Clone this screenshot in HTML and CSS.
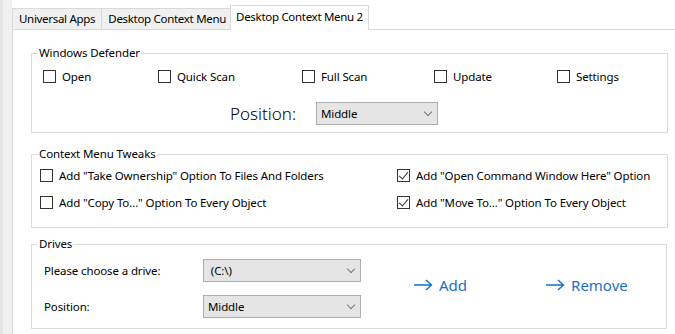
FILE: index.html
```html
<!DOCTYPE html>
<html lang="en">
<head>
    <meta charset="UTF-8">
    <title>Tweaks</title>
    <link rel="stylesheet" href="styles.css">
</head>
<body>
    <div id="lateral"></div>
    <div id="janela">
        <div id="abas">
            <span class="aba">Universal Apps</span>
            <span class="aba">Desktop Context Menu</span>
            <span class="aba ativa">Desktop Context Menu 2</span>
        </div>
        <div id="pagina">
            <fieldset class="grupo" id="defender">
                <legend>Windows Defender</legend>
                <div class="linha-def">
                    <label class="opcao"><span class="caixa"></span>Open</label>
                    <label class="opcao"><span class="caixa"></span>Quick Scan</label>
                    <label class="opcao"><span class="caixa"></span>Full Scan</label>
                    <label class="opcao"><span class="caixa"></span>Update</label>
                    <label class="opcao"><span class="caixa"></span>Settings</label>
                </div>
                <div class="linha-pos">
                    <span class="pos-grande">Position:</span>
                    <div class="combo combo-def">Middle<span class="seta"></span></div>
                </div>
            </fieldset>

            <fieldset class="grupo" id="tweaks">
                <legend>Context Menu Tweaks</legend>
                <div class="grade-tweaks">
                    <label class="opcao"><span class="caixa"></span>Add "Take Ownership" Option To Files And Folders</label>
                    <label class="opcao"><span class="caixa marcada"></span>Add "Open Command Window Here" Option</label>
                    <label class="opcao"><span class="caixa"></span>Add "Copy To..." Option To Every Object</label>
                    <label class="opcao"><span class="caixa marcada"></span>Add "Move To..." Option To Every Object</label>
                </div>
            </fieldset>

            <fieldset class="grupo" id="drives">
                <legend>Drives</legend>
                <div class="drives-corpo">
                    <div class="drives-campos">
                        <div class="campo">
                            <span class="rotulo">Please choose a drive:</span>
                            <div class="combo combo-drive">&nbsp;(C:\)<span class="seta"></span></div>
                        </div>
                        <div class="campo">
                            <span class="rotulo">Position:</span>
                            <div class="combo combo-drive">Middle<span class="seta"></span></div>
                        </div>
                    </div>
                    <a class="link" href="#"><svg width="20" height="12" viewBox="0 0 20 12"><path d="M1 6H18M13 1L18.5 6L13 11" fill="none" stroke="currentColor" stroke-width="1.4"/></svg>Add</a>
                    <a class="link" href="#"><svg width="20" height="12" viewBox="0 0 20 12"><path d="M1 6H18M13 1L18.5 6L13 11" fill="none" stroke="currentColor" stroke-width="1.4"/></svg>Remove</a>
                </div>
            </fieldset>
        </div>
    </div>
</body>
</html>
```

FILE: styles.css
```css
*{
    margin: 0;
    padding: 0;
    box-sizing: border-box;
}

body{
    display: flex;
    height: 334px;
    overflow: hidden;
    background: #fff;
    font-family: "Noto Sans", "Open Sans", sans-serif;
    font-size: 11.5px;
    letter-spacing: -0.12px;
    color: #000;
}

#lateral{
    width: 12px;
    background: #f0f0f0;
    border-left: 3px solid #e6e6e6;
    flex-shrink: 0;
}

#janela{
    flex: 1;
    display: flex;
    flex-direction: column;
}

#abas{
    height: 29px;
    display: flex;
    align-items: flex-end;
}
.aba{
    height: 21px;
    padding: 0 6px;
    line-height: 19px;
    background: #f0f0f0;
    border: 1px solid #d9d9d9;
    border-bottom: none;
    margin-right: -1px;
    white-space: nowrap;
    letter-spacing: -0.3px;
}
.aba.ativa{
    height: 25px;
    padding: 0 5px;
    margin-left: -2px;
    line-height: 21px;
    background: #fff;
    margin-bottom: -1px;
    position: relative;
}

#pagina{
    flex: 1;
    border-top: 1px solid #d9d9d9;
    border-left: 1px solid #d9d9d9;
    padding-left: 18px;
}

.grupo{
    width: 637px;
    border: 1px solid #dcdcdc;
    padding: 0 0 0 6px;
}
.grupo legend{
    padding: 0 1px;
    line-height: 16px;
}

#defender{
    margin-top: 15px;
    height: 88px;
}
.linha-def{
    display: grid;
    grid-template-columns: 115px 144px 132px 123px auto;
    padding: 7px 0 0 5px;
}
.opcao{
    display: flex;
    align-items: center;
    white-space: nowrap;
    height: 16px;
}
.caixa{
    width: 13px;
    height: 13px;
    border: 1px solid #333;
    background: #fff;
    margin-right: 6px;
    flex-shrink: 0;
    position: relative;
}
.caixa.marcada::after{
    content: "";
    position: absolute;
    left: 3px;
    top: 0px;
    width: 4px;
    height: 8px;
    border: solid #333;
    border-width: 0 1px 1px 0;
    transform: rotate(40deg);
}

.linha-pos{
    display: flex;
    align-items: center;
    margin: 18px 0 0 192px;
}
.pos-grande{
    font-size: 17px;
    font-weight: 300;
    letter-spacing: 0;
    width: 86px;
}

.combo{
    height: 23px;
    border: 1px solid #adadad;
    background: #e5e5e5;
    line-height: 21px;
    padding-left: 4px;
    position: relative;
}
.combo-def{
    width: 122px;
}
.seta{
    position: absolute;
    right: 6px;
    top: 6px;
    width: 6px;
    height: 6px;
    border: solid #777;
    border-width: 0 1px 1px 0;
    transform: rotate(45deg);
}

#tweaks{
    margin-top: 13px;
    height: 82px;
}
.grade-tweaks{
    display: grid;
    grid-template-columns: 357px auto;
    row-gap: 11px;
    padding: 5px 0 0 2px;
}

#drives{
    margin-top: 8px;
    width: 636px;
    height: 93px;
}
.drives-corpo{
    display: flex;
    align-items: center;
}
.drives-campos{
    display: flex;
    flex-direction: column;
    gap: 13px;
    padding: 7px 0 0 6px;
}
.campo{
    display: flex;
    align-items: center;
}
.rotulo{
    width: 159px;
}
.combo-drive{
    width: 158px;
    height: 23px;
}
.link{
    display: flex;
    align-items: center;
    gap: 6px;
    color: #1a6fc0;
    text-decoration: none;
    font-size: 15px;
    letter-spacing: 0;
    margin-left: 52px;
    margin-top: 0;
}
.link + .link{
    margin-left: 78px;
}
```
